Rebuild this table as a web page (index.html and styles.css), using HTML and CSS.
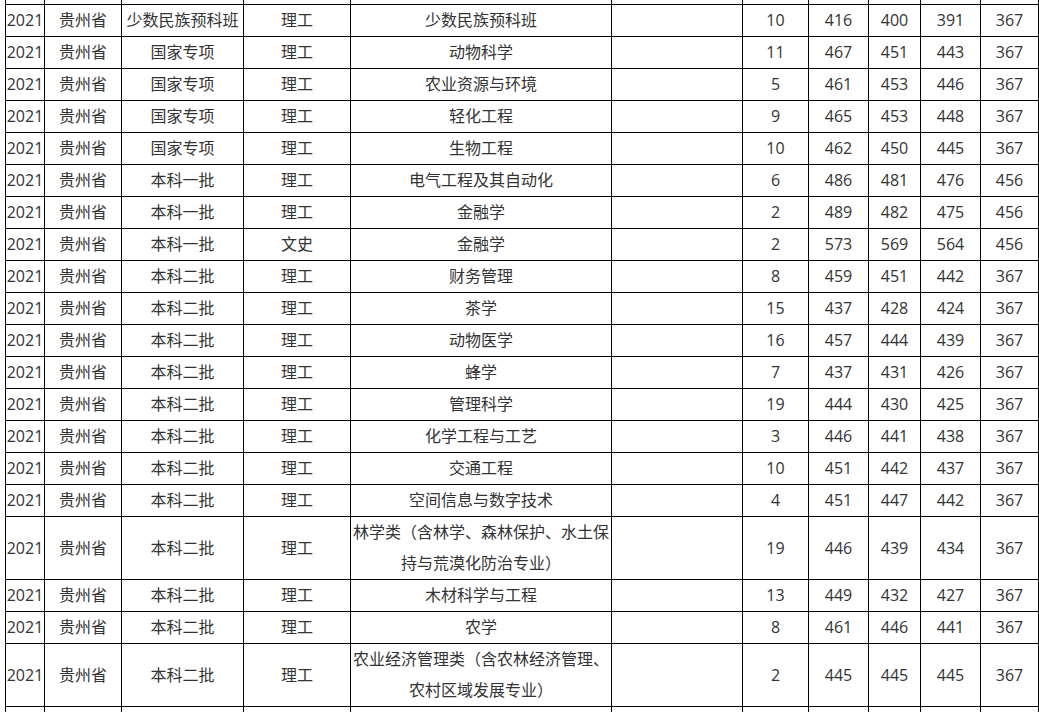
FILE: index.html
```html
<!DOCTYPE html>
<html lang="zh-CN">
<head>
<meta charset="utf-8">
<title>录取分数</title>
<link rel="stylesheet" href="styles.css">
</head>
<body>
<div class="wrap">
<table class="scores">
<colgroup>
<col class="c1"><col class="c2"><col class="c3"><col class="c4"><col class="c5"><col class="c6"><col class="c7"><col class="c8"><col class="c9"><col class="c10"><col class="c11">
</colgroup>
<tbody>
<tr><td>2021</td><td>贵州省</td><td>少数民族预科班</td><td>文史</td><td>少数民族预科班</td><td></td><td>3</td><td>500</td><td>490</td><td>480</td><td>456</td></tr>
<tr><td>2021</td><td>贵州省</td><td>少数民族预科班</td><td>理工</td><td>少数民族预科班</td><td></td><td>10</td><td>416</td><td>400</td><td>391</td><td>367</td></tr>
<tr><td>2021</td><td>贵州省</td><td>国家专项</td><td>理工</td><td>动物科学</td><td></td><td>11</td><td>467</td><td>451</td><td>443</td><td>367</td></tr>
<tr><td>2021</td><td>贵州省</td><td>国家专项</td><td>理工</td><td>农业资源与环境</td><td></td><td>5</td><td>461</td><td>453</td><td>446</td><td>367</td></tr>
<tr><td>2021</td><td>贵州省</td><td>国家专项</td><td>理工</td><td>轻化工程</td><td></td><td>9</td><td>465</td><td>453</td><td>448</td><td>367</td></tr>
<tr><td>2021</td><td>贵州省</td><td>国家专项</td><td>理工</td><td>生物工程</td><td></td><td>10</td><td>462</td><td>450</td><td>445</td><td>367</td></tr>
<tr><td>2021</td><td>贵州省</td><td>本科一批</td><td>理工</td><td>电气工程及其自动化</td><td></td><td>6</td><td>486</td><td>481</td><td>476</td><td>456</td></tr>
<tr><td>2021</td><td>贵州省</td><td>本科一批</td><td>理工</td><td>金融学</td><td></td><td>2</td><td>489</td><td>482</td><td>475</td><td>456</td></tr>
<tr><td>2021</td><td>贵州省</td><td>本科一批</td><td>文史</td><td>金融学</td><td></td><td>2</td><td>573</td><td>569</td><td>564</td><td>456</td></tr>
<tr><td>2021</td><td>贵州省</td><td>本科二批</td><td>理工</td><td>财务管理</td><td></td><td>8</td><td>459</td><td>451</td><td>442</td><td>367</td></tr>
<tr><td>2021</td><td>贵州省</td><td>本科二批</td><td>理工</td><td>茶学</td><td></td><td>15</td><td>437</td><td>428</td><td>424</td><td>367</td></tr>
<tr><td>2021</td><td>贵州省</td><td>本科二批</td><td>理工</td><td>动物医学</td><td></td><td>16</td><td>457</td><td>444</td><td>439</td><td>367</td></tr>
<tr><td>2021</td><td>贵州省</td><td>本科二批</td><td>理工</td><td>蜂学</td><td></td><td>7</td><td>437</td><td>431</td><td>426</td><td>367</td></tr>
<tr><td>2021</td><td>贵州省</td><td>本科二批</td><td>理工</td><td>管理科学</td><td></td><td>19</td><td>444</td><td>430</td><td>425</td><td>367</td></tr>
<tr><td>2021</td><td>贵州省</td><td>本科二批</td><td>理工</td><td>化学工程与工艺</td><td></td><td>3</td><td>446</td><td>441</td><td>438</td><td>367</td></tr>
<tr><td>2021</td><td>贵州省</td><td>本科二批</td><td>理工</td><td>交通工程</td><td></td><td>10</td><td>451</td><td>442</td><td>437</td><td>367</td></tr>
<tr><td>2021</td><td>贵州省</td><td>本科二批</td><td>理工</td><td>空间信息与数字技术</td><td></td><td>4</td><td>451</td><td>447</td><td>442</td><td>367</td></tr>
<tr><td>2021</td><td>贵州省</td><td>本科二批</td><td>理工</td><td>林学类（含林学、森林保护、水土保持与荒漠化防治专业）</td><td></td><td>19</td><td>446</td><td>439</td><td>434</td><td>367</td></tr>
<tr><td>2021</td><td>贵州省</td><td>本科二批</td><td>理工</td><td>木材科学与工程</td><td></td><td>13</td><td>449</td><td>432</td><td>427</td><td>367</td></tr>
<tr><td>2021</td><td>贵州省</td><td>本科二批</td><td>理工</td><td>农学</td><td></td><td>8</td><td>461</td><td>446</td><td>441</td><td>367</td></tr>
<tr><td>2021</td><td>贵州省</td><td>本科二批</td><td>理工</td><td>农业经济管理类（含农林经济管理、农村区域发展专业）</td><td></td><td>2</td><td>445</td><td>445</td><td>445</td><td>367</td></tr>
<tr><td>2021</td><td>贵州省</td><td>本科二批</td><td>理工</td><td>食品科学与工程</td><td></td><td>6</td><td>455</td><td>445</td><td>440</td><td>367</td></tr>
<tr><td>2021</td><td>贵州省</td><td>本科二批</td><td>理工</td><td>园林</td><td></td><td>9</td><td>450</td><td>441</td><td>436</td><td>367</td></tr>
</tbody>
</table>
</div>
</body>
</html>
```

FILE: styles.css
```css
html, body {
  margin: 0;
  padding: 0;
  background: #fff;
  overflow: hidden;
}
.wrap {
  padding-left: 5px;
  margin-top: -28px;
}
.scores {
  border-collapse: collapse;
  table-layout: fixed;
  width: 1034px;
  font-family: "Open Sans", "Noto Sans CJK SC", sans-serif;
  font-size: 16px;
  color: #333;
}
.scores td {
  border: 1px solid #000;
  padding: 0;
  line-height: 31px;
  text-align: center;
  vertical-align: middle;
  white-space: normal;
}
.c1 { width: 39px; }
.c2 { width: 77px; }
.c3 { width: 122px; }
.c4 { width: 107px; }
.c5 { width: 261px; }
.c6 { width: 131px; }
.c7 { width: 66px; }
.c8 { width: 60px; }
.c9 { width: 52px; }
.c10 { width: 60px; }
.c11 { width: 58px; }
```
